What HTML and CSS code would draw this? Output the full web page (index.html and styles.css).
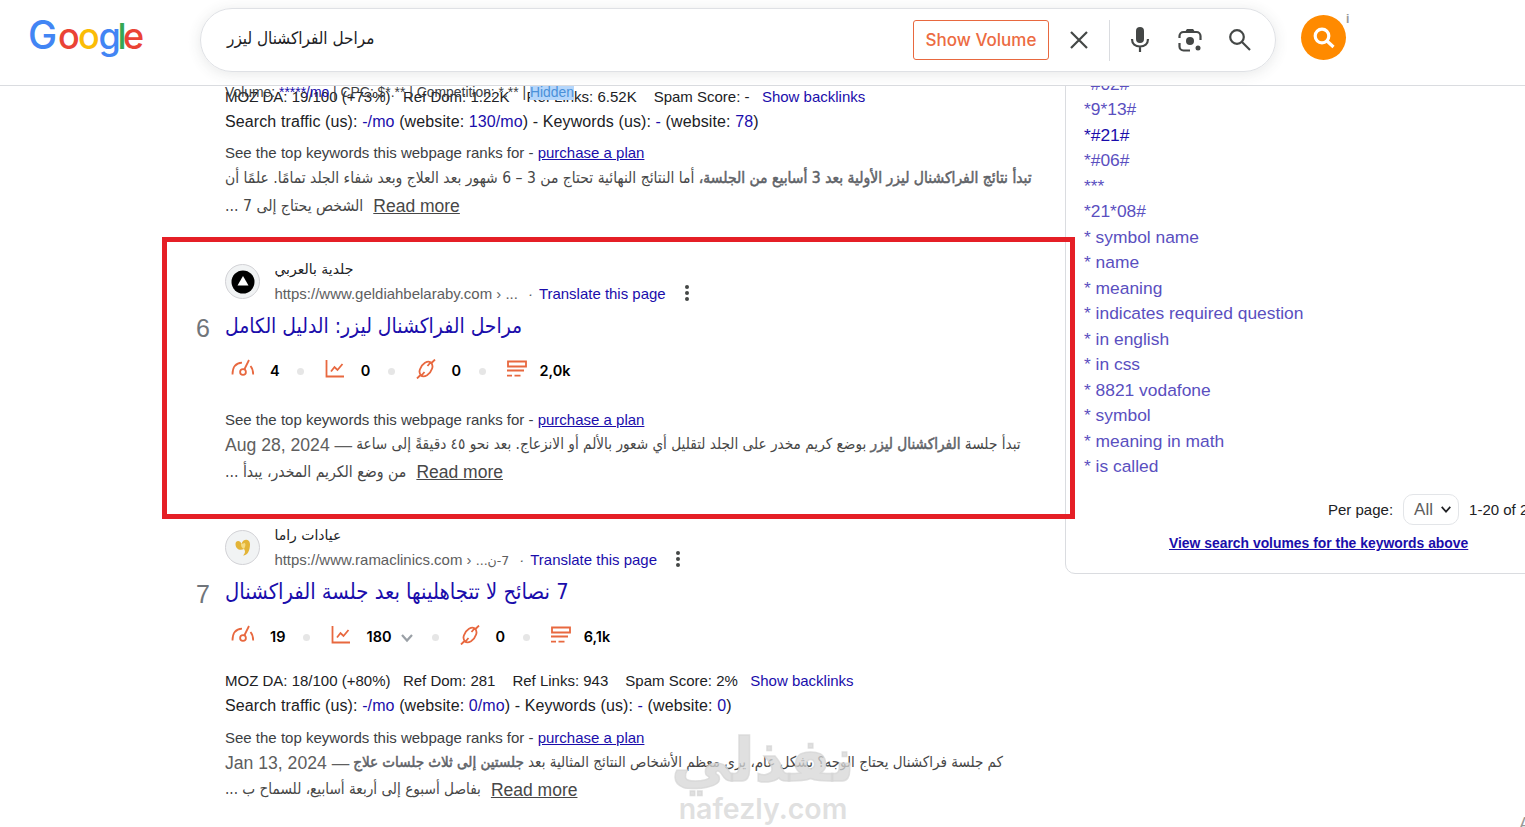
FILE: index.html
```html
<!DOCTYPE html>
<html lang="en">

<head>
  <meta charset="UTF-8">
  <meta name="viewport" content="width=device-width, initial-scale=1.0">
  <title>مراحل الفراكشنال ليزر - Google Search</title>
  <link rel="stylesheet" href="styles.css">
</head>

<body>

  <!-- icons used more than once -->
  <svg class="defs">
    <symbol id="speed" viewBox="0 0 24 20">
      <path d="M1.500 15.500C1.500 8 5 4 11 3.600M19.500 7c1.700 2 2.700 5 2.700 8.500M18 1L13.300 10.500" />
      <circle cx="12" cy="13" r="2.900" />
    </symbol>
    <symbol id="chart" viewBox="0 0 20 20">
      <path d="M1.500 1v16.500H19M6 12.500l3.500-4.500 3 3L17.500 5" />
    </symbol>
    <symbol id="chain" viewBox="0 0 20 20">
      <path d="M8.500 13l-3 3.500C1.500 14 4 7 9 3.800c2.700-1.600 5-1.300 6.500.2M11.500 7l3-3.500c4 2.500 1.500 9.500-3.500 12.700-2.700 1.600-5 1.300-6.500-.2M1 19.500L4.500 16M15.500 4L19 .5" />
    </symbol>
    <symbol id="rows" viewBox="0 0 20 18">
      <path d="M1 1.500h18v5H1zM0 10.500h17M0 15.700h5M7.500 15.700h6" />
    </symbol>
    <symbol id="down" viewBox="0 0 14 10">
      <path d="M2 2l5 5.500L12 2" />
    </symbol>
  </svg>

  <header class="header">
    <svg class="logo" viewBox="0 0 116 44">
      <text y="32" x="-2 28 48 68.500 87.500 93"><tspan class="g" fill="#4285f4">G</tspan><tspan fill="#ea4335">o</tspan><tspan fill="#fbbc05">o</tspan><tspan fill="#4285f4">g</tspan><tspan fill="#34a853">l</tspan><tspan fill="#ea4335">e</tspan></text>
    </svg>
    <div class="search">
      <span class="query ar" dir="rtl">مراحل الفراكشنال ليزر</span>
      <button class="volume">Show Volume</button>
      <svg class="icon close" viewBox="0 0 24 24"><path d="M4 4l16 16M20 4L4 20" /></svg>
      <span class="divider"></span>
      <svg class="icon mic" viewBox="0 0 24 28">
        <rect x="8" y="1" width="8" height="16" rx="4" fill="#444746" stroke="none" />
        <path d="M4 13c0 5 3.500 7.500 8 7.500s8-2.500 8-7.500M12 20.500V26" />
      </svg>
      <svg class="icon lens" viewBox="0 0 24 24">
        <path d="M1.500 10V8a4 4 0 0 1 4-4h13a4 4 0 0 1 4 4v4M1.500 15v3.500a4 4 0 0 0 4 4H12" />
        <path d="M8.500 3.500L9.500 2h5l1 1.500" />
        <circle class="fill" cx="12" cy="13" r="4" />
        <circle class="fill" cx="20" cy="20" r="2.500" />
      </svg>
      <svg class="icon find" viewBox="0 0 24 24"><circle cx="9" cy="9" r="6.800" /><path d="M14 14l8 8" /></svg>
    </div>
    <div class="orange">
      <svg viewBox="0 0 24 24"><circle cx="10" cy="10" r="6.800" /><path d="M15 15l6.500 6" /></svg>
      <span class="info">i</span>
    </div>
  </header>

  <div class="main">
    <div class="results">

      <div class="result first">
        <div class="overlap">Volume: <a>*****/mo</a> | CPC: $*.** | Competition: *.** | <mark>Hidden</mark></div>
        <div class="moz"><span>MOZ DA: 19/100 (+73%)</span><span>Ref Dom: 1.22K</span><span>Ref Links: 6.52K</span><span>Spam Score: -</span><a>Show backlinks</a></div>
        <div class="traffic">Search traffic (us): <a>-/mo</a> (website: <a>130/mo</a>) - Keywords (us): <a>-</a> (website: <a>78</a>)</div>
        <div class="see">See the top keywords this webpage ranks for - <a>purchase a plan</a></div>
        <div class="snippet"><span class="ar s1" dir="rtl"><b>تبدأ نتائج الفراكشنال ليزر الأولية بعد 3 أسابيع من الجلسة،</b> أما النتائج النهائية تحتاج من 3 – 6 شهور بعد العلاج وبعد شفاء الجلد تمامًا. علمًا أن</span></div>
        <div class="snippet"><span class="ar s2" dir="rtl">الشخص يحتاج إلى 7 ...</span><a class="more">Read more</a></div>
      </div>

      <div class="result">
        <span class="rank">6</span>
        <div class="site">
          <span class="favicon">
            <svg viewBox="0 0 24 24"><circle cx="12" cy="12" r="11.500" fill="#000" /><path d="M12 6l5.500 9.500h-11z" fill="#fff" /></svg>
          </span>
          <div>
            <div class="name"><span class="ar" dir="rtl">جلدية بالعربي</span></div>
            <div class="url"><span>https://www.geldiahbelaraby.com › ...</span><i>·</i><a>Translate this page</a><span class="dots"></span></div>
          </div>
        </div>
        <h3 class="title"><span class="ar t1" dir="rtl">مراحل الفراكشنال ليزر: الدليل الكامل</span></h3>
        <div class="metrics">
          <svg class="speed"><use href="#speed" /></svg><span>4</span><i></i>
          <svg><use href="#chart" /></svg><span>0</span><i></i>
          <svg><use href="#chain" /></svg><span>0</span><i></i>
          <svg class="rows"><use href="#rows" /></svg><span>2,0k</span>
        </div>
        <div class="see">See the top keywords this webpage ranks for - <a>purchase a plan</a></div>
        <div class="snippet"><span class="date">Aug 28, 2024 —</span><span class="ar s3" dir="rtl">تبدأ جلسة <b>الفراكشنال ليزر</b> بوضع كريم مخدر على الجلد لتقليل أي شعور بالألم أو الانزعاج. بعد نحو ٤٥ دقيقةً إلى ساعة</span></div>
        <div class="snippet"><span class="ar s4" dir="rtl">من وضع الكريم المخدر، يبدأ ...</span><a class="more">Read more</a></div>
      </div>

      <div class="result">
        <span class="rank">7</span>
        <div class="site">
          <span class="favicon">
            <svg viewBox="0 0 24 24"><path d="M4.500 8c0-4 5-4 6 0 1-5 8-6 8.500 0 0 6-2 11.500-7 11.500 3-3 2-5 1-6.500-4 2-8.500 0-8.500-5z" fill="#e3b437" /><path d="M10 8c0 3 1 4 3 5 1-2 2-4 1-6" fill="#f6dc84" /></svg>
          </span>
          <div>
            <div class="name"><span class="ar" dir="rtl">عيادات راما</span></div>
            <div class="url"><span>https://www.ramaclinics.com › <bdi class="ar" dir="rtl">7-ن...</bdi></span><i>·</i><a>Translate this page</a><span class="dots"></span></div>
          </div>
        </div>
        <h3 class="title"><span class="ar t2" dir="rtl">7 نصائح لا تتجاهلينها بعد جلسة الفراكشنال</span></h3>
        <div class="metrics">
          <svg class="speed"><use href="#speed" /></svg><span>19</span><i></i>
          <svg><use href="#chart" /></svg><span>180</span><svg class="down"><use href="#down" /></svg><i></i>
          <svg><use href="#chain" /></svg><span>0</span><i></i>
          <svg class="rows"><use href="#rows" /></svg><span>6,1k</span>
        </div>
        <div class="moz"><span>MOZ DA: 18/100 (+80%)</span><span>Ref Dom: 281</span><span>Ref Links: 943</span><span>Spam Score: 2%</span><a>Show backlinks</a></div>
        <div class="traffic">Search traffic (us): <a>-/mo</a> (website: <a>0/mo</a>) - Keywords (us): <a>-</a> (website: <a>0</a>)</div>
        <div class="see">See the top keywords this webpage ranks for - <a>purchase a plan</a></div>
        <div class="snippet"><span class="date">Jan 13, 2024 —</span><span class="ar s5" dir="rtl">كم جلسة فراكشنال يحتاج الوجه؟ بشكل عام، يرى معظم الأشخاص النتائج المثالية بعد <b>جلستين إلى ثلاث جلسات علاج</b></span></div>
        <div class="snippet"><span class="ar s6" dir="rtl">بفاصل أسبوع إلى أربعة أسابيع، للسماح ب ...</span><a class="more">Read more</a></div>
      </div>

    </div>

    <aside class="side">
      <ul class="keywords">
        <li>*#02#</li>
        <li>*9*13#</li>
        <li class="new">*#21#</li>
        <li>*#06#</li>
        <li>***</li>
        <li>*21*08#</li>
        <li>* symbol name</li>
        <li>* name</li>
        <li>* meaning</li>
        <li>* indicates required question</li>
        <li>* in english</li>
        <li>* in css</li>
        <li>* 8821 vodafone</li>
        <li>* symbol</li>
        <li>* meaning in math</li>
        <li>* is called</li>
      </ul>
      <div class="pager">
        <span>Per page:</span>
        <span class="select">All <svg><use href="#down" /></svg></span>
        <span>1-20 of 20</span>
      </div>
      <a class="view">View search volumes for the keywords above</a>
    </aside>
  </div>

  <div class="highlight"></div>
  <div class="watermark">
    <span class="wm-ar" dir="rtl">نفذلي</span>
    <span class="wm-en">nafezly.com</span>
  </div>
  <span class="activate">Activate</span>

</body>

</html>
```
FILE: styles.css
```css
* {
  margin: 0;
  padding: 0;
  box-sizing: border-box;
}

body {
  width: 1525px;
  height: 827px;
  overflow: hidden;
  position: relative;
  background: #fff;
  color: #3c4043;
  font-family: "Liberation Sans", Arial, sans-serif;
}

a {
  color: #1a0dab;
}

ul {
  list-style: none;
}

.defs {
  display: none;
}

.ar {
  font-family: "DejaVu Sans Condensed", "DejaVu Sans", sans-serif;
  font-stretch: condensed;
  white-space: nowrap;
}

/* header */
.header {
  position: relative;
  z-index: 2;
  display: flex;
  align-items: flex-start;
  height: 86px;
  padding: 8px 0 0 30px;
  background: #fff;
  border-bottom: 1px solid #dadce0;
}

.logo {
  width: 116px;
  height: 44px;
  margin: 9px 54px 0 0;
  overflow: visible;
  font: 500 36px Inter, sans-serif;
}

.logo .g {
  font-size: 39px;
}

.search {
  display: flex;
  align-items: center;
  width: 1076px;
  height: 64px;
  padding: 0 23px 0 26px;
  border: 1px solid #dfe1e5;
  border-radius: 32px;
  box-shadow: 0 2px 14px rgba(60, 64, 67, .12);
}

.query {
  margin: 0 auto 4px 0;
  color: #202124;
  font-size: 17px;
}

.volume {
  width: 136px;
  height: 40px;
  border: 1px solid #e8683f;
  border-radius: 3px;
  background: #fff;
  color: #ec6b42;
  font: 500 17px Inter, sans-serif;
  white-space: nowrap;
}

.icon {
  width: 24px;
  height: 24px;
  fill: none;
  stroke: #444746;
  stroke-width: 2.2;
}

.icon .fill {
  fill: #444746;
  stroke: none;
}

.close {
  margin: 0 18px;
}

.divider {
  width: 1px;
  height: 41px;
  background: #dadce0;
}

.mic {
  height: 28px;
  margin: 0 26px 0 18px;
}

.find {
  margin-left: 26px;
}

.orange {
  position: relative;
  display: flex;
  align-items: center;
  justify-content: center;
  width: 45px;
  height: 45px;
  margin: 7px 0 0 25px;
  border-radius: 50%;
  background: #ff8a00;
}

.orange svg {
  width: 24px;
  height: 24px;
  fill: none;
  stroke: #fff;
  stroke-width: 3.2;
}

.info {
  position: absolute;
  left: 45px;
  top: -3px;
  color: #999;
  font: bold 12px "Liberation Sans", sans-serif;
}

/* results */
.main {
  display: flex;
  align-items: flex-start;
}

.results {
  width: 1065px;
  flex: none;
  padding-left: 225px;
}

.result {
  position: relative;
  height: 266px;
  white-space: nowrap;
}

.first {
  height: 174px;
}

.overlap {
  position: absolute;
  left: 0;
  top: -2px;
  font-size: 13.9px;
  line-height: 18px;
}

.overlap mark {
  background: #b5d6fb;
  color: #4a90d9;
}

.moz {
  display: flex;
  gap: 12.4px;
  font-size: 15px;
  line-height: 24px;
  color: #202124;
}

.moz span:nth-child(3) {
  margin: 0 4.6px;
}

.traffic {
  font-size: 16px;
  letter-spacing: .11px;
  line-height: 25px;
  color: #202124;
}

.see {
  margin-top: 7px;
  font-size: 15px;
  line-height: 24px;
}

.see a,
.view,
.more {
  text-decoration: underline;
}

.snippet {
  display: flex;
  height: 27px;
  align-items: center;
  font-size: 17.5px;
  color: #474747;
}

.snippet .ar {
  margin-bottom: 3px;
  font-size: 15px;
}

.snippet .s1 {
  font-size: 15.52px;
}

.snippet .s2,
.snippet .s4 {
  font-size: 15.7px;
}

.snippet .s3,
.snippet .s6 {
  font-size: 15.19px;
}

/* heavier strokes without the wide bold cut */
.snippet b {
  color: #5f6368;
  font-weight: normal;
  -webkit-text-stroke: .5px #5f6368;
}

.first .moz {
  margin-top: -1px;
}

.first .snippet {
  height: 28px;
}

.date {
  margin-right: 4px;
  color: #5e5e5e;
  font-size: 17.6px;
}

.more {
  margin-left: 10px;
  color: #474747;
}

.first .more {
  margin-bottom: 2px;
}

.rank {
  position: absolute;
  left: -29px;
  top: 53px;
  color: #70757a;
  font-size: 25px;
  line-height: 32px;
}

.site {
  display: flex;
  gap: 14.4px;
  height: 50px;
}

.favicon {
  display: flex;
  align-items: center;
  justify-content: center;
  width: 35px;
  height: 35px;
  margin-top: 5px;
  border: 1px solid #d2d2d6;
  border-radius: 50%;
  background: #f1f3f4;
}

.favicon svg {
  width: 24px;
  height: 24px;
}

.name {
  height: 22px;
  color: #202124;
  font-size: 14px;
  line-height: 20px;
}

.name .ar,
.url .ar {
  font-family: "DejaVu Sans", sans-serif;
  font-stretch: normal;
}

.url .ar {
  font-size: 12.5px;
}

.url {
  display: flex;
  align-items: center;
  height: 24px;
  color: #5e5e5e;
  font-size: 14.98px;
}

.url i {
  margin: 0 6px 0 10px;
}

.dots {
  width: 4px;
  height: 4px;
  margin-left: 19px;
  border-radius: 50%;
  background: #444746;
  box-shadow: 0 -6px #444746, 0 6px #444746;
}

.title {
  height: 34px;
  color: #1a0dab;
  font-size: 21.8px;
  font-weight: normal;
  line-height: 34px;
}

.title .t1 {
  font-size: 20.9px;
}

.metrics {
  display: flex;
  align-items: center;
  height: 28px;
  margin: 13px 0 17px 6px;
  color: #000;
  font: 600 14.5px Inter, sans-serif;
}

.metrics svg {
  width: 20px;
  height: 20px;
  margin-right: 15.6px;
  margin-bottom: 3px;
  fill: none;
  stroke: #e8683f;
  stroke-width: 1.8;
}

.metrics .speed {
  width: 24px;
  margin-right: 15px;
}

.metrics .rows {
  margin-right: 13px;
}

.metrics .down {
  width: 14px;
  height: 10px;
  margin: 3px 0 0 9px;
  stroke: #9aa0a6;
  stroke-width: 2.2;
}

.metrics i {
  width: 7px;
  height: 7px;
  margin: 3px 21px 0 17.5px;
  border-radius: 50%;
  background: #e6e6e6;
}

.metrics + .moz {
  margin-top: 19px;
}

.metrics + .see {
  margin-top: 24px;
}

.metrics ~ .traffic {
  line-height: 26px;
}

/* keyword panel */
.side {
  flex: none;
  width: 480px;
  height: 508px;
  margin-top: -20px;
  padding: 4.5px 0 0 18px;
  border: 1px solid #dadce0;
  border-radius: 10px;
}

.keywords li {
  height: 25.5px;
  color: #5a4fc0;
  font-size: 17.4px;
  line-height: 25.5px;
}

.keywords .new {
  color: #1a0dab;
}

.pager {
  display: flex;
  align-items: center;
  height: 31px;
  margin: 14.5px 0 0 244px;
  gap: 10px;
  color: #202124;
  font-size: 15px;
  white-space: nowrap;
}

.select {
  display: flex;
  align-items: center;
  gap: 7px;
  width: 56px;
  height: 31px;
  padding-left: 10px;
  border: 1px solid #e3e5e8;
  border-radius: 10px;
  color: #5e5e5e;
  font-size: 17px;
}

.select svg {
  width: 12px;
  height: 9px;
  fill: none;
  stroke: #202124;
  stroke-width: 2;
}

.view {
  display: block;
  margin: 9px 0 0 85px;
  font-size: 13.9px;
  font-weight: bold;
  line-height: 18px;
}

/* red frame round the matching result */
.highlight {
  position: absolute;
  z-index: 3;
  left: 162px;
  top: 237px;
  width: 913px;
  height: 282px;
  border: 5px solid #e51f26;
}

.watermark {
  position: absolute;
  z-index: 3;
  left: 668px;
  top: 727px;
  width: 190px;
  color: rgba(214, 214, 214, .75);
  text-align: center;
}

.wm-ar {
  display: block;
  height: 65px;
  font: bold 60px/66px "DejaVu Sans", sans-serif;
  -webkit-text-stroke: 1.5px rgba(214, 214, 214, .75);
}

.wm-en {
  display: block;
  font: 600 28.5px/34px Inter, sans-serif;
}

.activate {
  position: absolute;
  left: 1519px;
  top: 814px;
  color: #999;
  font-size: 18px;
}
```
